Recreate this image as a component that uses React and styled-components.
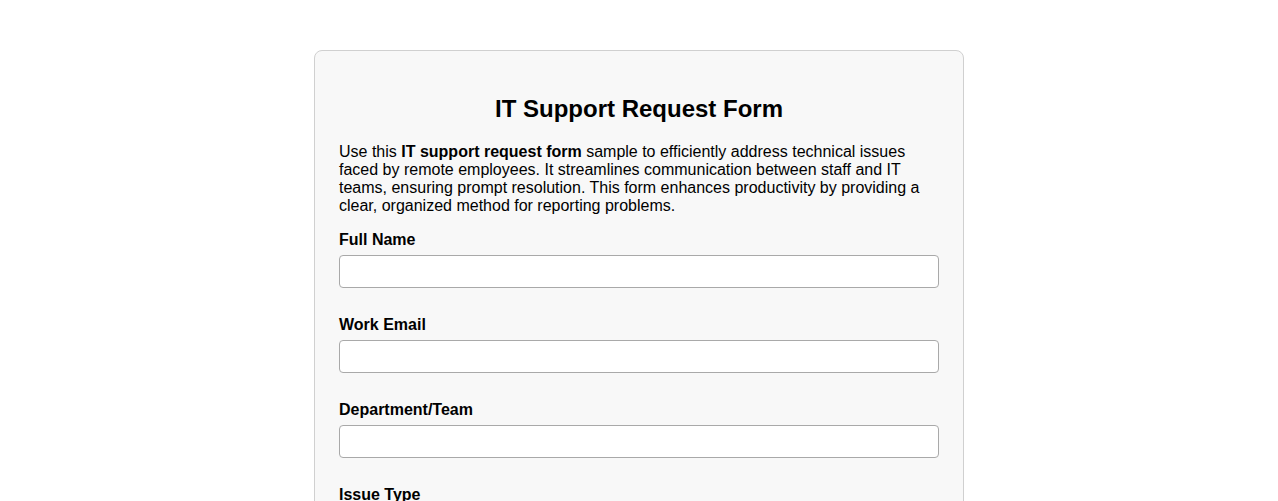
import React from "react";
import styled, { createGlobalStyle } from "styled-components";

const GlobalStyle = createGlobalStyle`
  body {
    margin: 0;
    background: #fff;
    font-family: "Liberation Sans", Arial, sans-serif;
    color: #000;
  }
`;

const Page = styled.div`
  padding-top: 50px;
  display: flex;
  justify-content: center;
`;

const Card = styled.form`
  width: 600px;
  padding: 24px;
  background: #f8f8f8;
  border: 1px solid #d0d0d0;
  border-radius: 8px;
`;

const Title = styled.h2`
  font-size: 24px;
  text-align: center;
  margin: 20px 0;
`;

const Intro = styled.p`
  font-size: 16px;
  margin: 0 0 16px;
`;

const Field = styled.div`
  margin-bottom: 28px;
`;

const Label = styled.label`
  display: block;
  font-size: 16px;
  font-weight: bold;
  line-height: 18px;
  margin-bottom: 6px;
`;

const Input = styled.input`
  display: block;
  box-sizing: border-box;
  width: 100%;
  height: 33px;
  padding: 8px;
  font-size: 16px;
  font-family: inherit;
  background: #fff;
  border: 1px solid #a9a9a9;
  border-radius: 4px;
`;

const fields = ["Full Name", "Work Email", "Department/Team", "Issue Type"];

export default function App() {
  return (
    <>
      <GlobalStyle />
      <Page>
        <Card>
          <Title>IT Support Request Form</Title>
          <Intro>
            Use this <strong>IT support request form</strong> sample to
            efficiently address technical issues faced by remote employees. It
            streamlines communication between staff and IT teams, ensuring
            prompt resolution. This form enhances productivity by providing a
            clear, organized method for reporting problems.
          </Intro>
          {fields.map((f) => (
            <Field key={f}>
              <Label>{f}</Label>
              <Input type="text" />
            </Field>
          ))}
        </Card>
      </Page>
    </>
  );
}
